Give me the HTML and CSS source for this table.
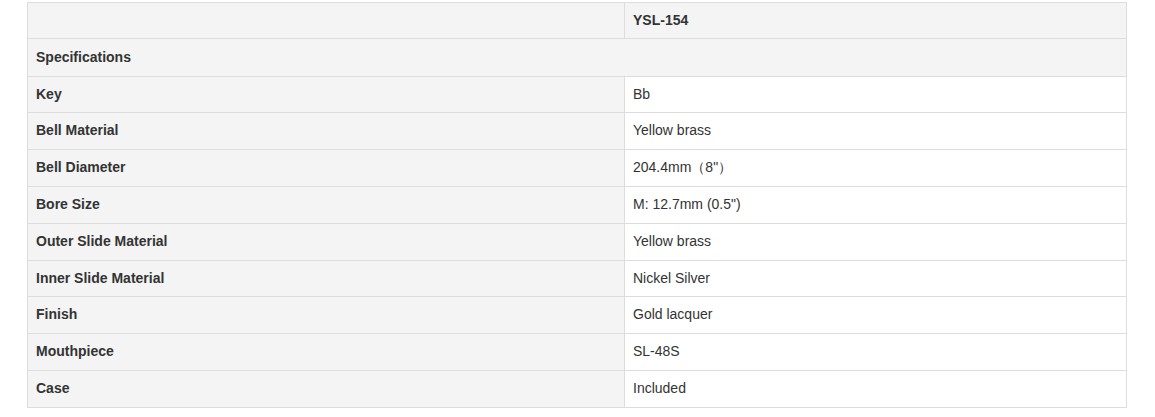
FILE: index.html
```html
<!DOCTYPE html>
<html>
<head>
<meta charset="utf-8">
<link rel="stylesheet" href="styles.css">
</head>
<body>
<div class="wrap">
<table class="spec">
  <tr class="head"><td class="label"></td><td class="model">YSL-154</td></tr>
  <tr class="group"><td class="label" colspan="2">Specifications</td></tr>
  <tr><td class="label">Key</td><td>Bb</td></tr>
  <tr><td class="label">Bell Material</td><td>Yellow brass</td></tr>
  <tr><td class="label">Bell Diameter</td><td>204.4mm（8"）</td></tr>
  <tr><td class="label">Bore Size</td><td>M: 12.7mm (0.5")</td></tr>
  <tr><td class="label">Outer Slide Material</td><td>Yellow brass</td></tr>
  <tr><td class="label">Inner Slide Material</td><td>Nickel Silver</td></tr>
  <tr><td class="label">Finish</td><td>Gold lacquer</td></tr>
  <tr><td class="label">Mouthpiece</td><td>SL-48S</td></tr>
  <tr><td class="label">Case</td><td>Included</td></tr>
</table>
</div>
</body>
</html>
```

FILE: styles.css
```css
html, body {
  margin: 0;
  padding: 0;
  background: #fff;
}
.wrap {
  padding: 2px 0 0 27px;
}
.spec {
  width: 1100px;
  border-collapse: collapse;
  table-layout: fixed;
  font-family: "Liberation Sans", Arial, sans-serif;
  font-size: 14px;
  color: #333;
}
.spec td {
  border: 1px solid #dddddd;
  padding: 8px 8px;
  line-height: 19.8px;
  text-align: left;
  vertical-align: middle;
  background: #fff;
}
.spec td.label {
  width: 580px;
  background: #f4f4f4;
  font-weight: bold;
}
.spec tr.head td {
  line-height: 18.8px;
}
.spec tr.group td {
  line-height: 20.8px;
}
.spec tr.head td,
.spec tr.group td {
  background: #f4f4f4;
  font-weight: bold;
}
```
